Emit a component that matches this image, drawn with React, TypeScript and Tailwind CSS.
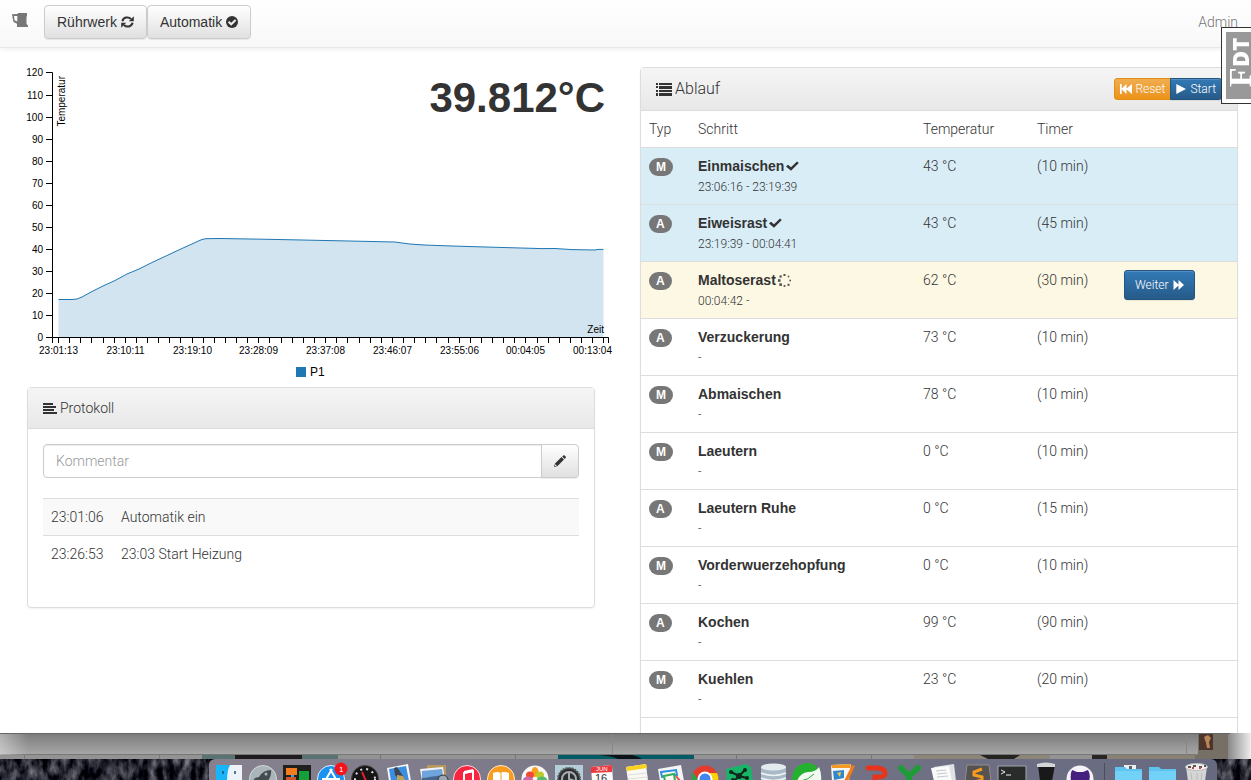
import type { ReactNode } from "react"

interface IconProps {
    className?: string
}

interface Step {
    type: "M" | "A"
    name: string
    time: string
    temp: number
    timer: number
    state?: "done" | "active"
}

const steps: Step[] = [
    { type: "M", name: "Einmaischen", time: "23:06:16 - 23:19:39", temp: 43, timer: 10, state: "done" },
    { type: "A", name: "Eiweisrast", time: "23:19:39 - 00:04:41", temp: 43, timer: 45, state: "done" },
    { type: "A", name: "Maltoserast", time: "00:04:42 -", temp: 62, timer: 30, state: "active" },
    { type: "A", name: "Verzuckerung", time: "-", temp: 73, timer: 10 },
    { type: "M", name: "Abmaischen", time: "-", temp: 78, timer: 10 },
    { type: "M", name: "Laeutern", time: "-", temp: 0, timer: 10 },
    { type: "A", name: "Laeutern Ruhe", time: "-", temp: 0, timer: 15 },
    { type: "M", name: "Vorderwuerzehopfung", time: "-", temp: 0, timer: 10 },
    { type: "A", name: "Kochen", time: "-", temp: 99, timer: 90 },
    { type: "M", name: "Kuehlen", time: "-", temp: 23, timer: 20 },
]

const logs = [
    { time: "23:01:06", text: "Automatik ein" },
    { time: "23:26:53", text: "23:03 Start Heizung" },
]

/* Icons */

const BeerIcon = ({ className }: IconProps) => (
    <svg className={className} viewBox="0 0 17 15" fill="currentColor">
        <path fillRule="evenodd" d="M0 1.2 6 1 5.6 0H15v3l-.5.8V11l1.5 1.5V14H5v-3.2L1.5 9 .8 6zM2 3l.5 4.2 2.8 1.2V3z" />
    </svg>
)

const RefreshIcon = ({ className }: IconProps) => (
    <svg className={className} viewBox="0 0 13 12" fill="none" stroke="currentColor" strokeWidth="2">
        <path d="M1.4 5.2A5 4.8 0 0 1 10 3M11.6 6.8A5 4.8 0 0 1 3 9" />
        <path d="M12.8.3v5H7.8zM.2 11.7v-5h5z" fill="currentColor" stroke="none" />
    </svg>
)

const OkSignIcon = ({ className }: IconProps) => (
    <svg className={className} viewBox="0 0 12 12">
        <circle cx="6" cy="6" r="6" fill="currentColor" />
        <path d="M2.6 5.8 5.2 8.3 9.6 4" fill="none" stroke="#f0f0f0" strokeWidth="2" />
    </svg>
)

const CheckIcon = ({ className }: IconProps) => (
    <svg className={className} viewBox="0 0 13 10" fill="currentColor">
        <path d="M0 5.6 2 3.7l3 2.6L11 .4l1.8 1.7L5 9.8z" />
    </svg>
)

const PencilIcon = ({ className }: IconProps) => (
    <svg className={className} viewBox="0 0 12 12" fill="currentColor">
        <path d="M9.2.4Q10 0 10.6.6l1 1q.6.7 0 1.4l-.9.9-2.5-2.5zM7.5 2.1 10 4.6 3.6 11 0 12l1-3.5z" />
        <path d="m1.4 9.2 1.4 1.4-1.3.4-.5-.5z" fill="#fff" />
    </svg>
)

const ListIcon = ({ className }: IconProps) => (
    <svg className={className} viewBox="0 0 16 13" fill="currentColor">
        <path d="M0 0h2v2H0zM3 0h13v2H3zM0 3h2v2H0zM3 3h13v3H3zM0 7h2v2H0zM3 7h13v2H3zM0 10h2v3H0zM3 10h13v3H3z" />
    </svg>
)

const AlignLeftIcon = ({ className }: IconProps) => (
    <svg className={className} viewBox="0 0 14 11" fill="currentColor">
        <path d="M0 0h10v2H0zM0 3h13v2H0zM0 6h11v2H0zM0 9h14v2H0z" />
    </svg>
)

const FastBackwardIcon = ({ className }: IconProps) => (
    <svg className={className} viewBox="0 0 12 10" fill="currentColor">
        <path d="M0 0h1.7v4.5L6.5 0v4.5L12 0v10L6.5 5.5V10L1.7 5.5V10H0z" />
    </svg>
)

const PlayIcon = ({ className }: IconProps) => (
    <svg className={className} viewBox="0 0 10 10" fill="currentColor">
        <path d="M.3 0 10 5 .3 10z" />
    </svg>
)

const ForwardIcon = ({ className }: IconProps) => (
    <svg className={className} viewBox="0 0 11 10" fill="currentColor">
        <path d="M.5 0 5.5 4.5V0L11 5 5.5 10V5.5L.5 10z" />
    </svg>
)

const spinnerDots = [
    [6.5, 1, 1],
    [10.5, 2.5, 0.8],
    [12.2, 6.5, 0.8],
    [10.5, 10.8, 1],
    [6.5, 12, 0.9],
    [2.6, 10.6, 1.3],
    [1.2, 6.5, 1.3],
    [2.6, 2.5, 1.1],
]

const SpinnerIcon = ({ className }: IconProps) => (
    <svg className={className} viewBox="0 0 13 13" fill="currentColor">
        {spinnerDots.map(([x, y, r], i) => (
            <rect key={i} x={x - r} y={y - r} width={r * 2} height={r * 2} opacity={0.85} />
        ))}
    </svg>
)

/* Chart */

const yTicks = Array.from({ length: 13 }, (_, i) => ({ value: i * 10, y: 270 - Math.round(i * 22.045) + 0.5 }))
const xTicks = Array.from({ length: 50 }, (_, i) => Math.round(46 + i * 11.13) + 0.5)
const xLabels = ["23:01:13", "23:10:11", "23:19:10", "23:28:09", "23:37:08", "23:46:07", "23:55:06", "00:04:05", "00:13:04"]

const line =
    "M46.5 232.5H60L65 232 70 230 80 224.500 91 219 103 213.500 115 207 127 202 140 195.500 155 188.500 170 181.500 186 174.200 190 172.500 194 171.700 208 171.500 250 172.200 290 173 383 175 390 176 398 177 412 178 440 179 480 180.200 530 181.600 543 181.500 560 182.600 583 183 586 182.400H591.500"

function Chart() {
    return (
        <div className="relative">
            <svg className="block w-full font-['Liberation_Sans',Arial,sans-serif] text-[10px]" viewBox="0 0 613 320">
                <path d={`${line}V270H46.500z`} fill="#1f77b4" fillOpacity="0.2" />
                <path d={line} fill="none" stroke="#1f77b4" />
                <path d="M34 5.500H40.500V270.500H34M40.500 276V270.500H596.500V276" fill="none" stroke="#000" />
                {yTicks.map((t) => (
                    <g key={t.value}>
                        <path d={`M34 ${t.y}h6`} stroke="#000" />
                        <text x="31" y={t.y + 3.5} textAnchor="end">{t.value}</text>
                    </g>
                ))}
                {xTicks.map((x, i) => (
                    <g key={x}>
                        <path d={`M${x} 270v6`} stroke="#000" />
                        {i % 6 === 0 && <text x={x} y="287" textAnchor="middle">{xLabels[i / 6]}</text>}
                    </g>
                ))}
                <text transform="translate(53 9) rotate(-90)" textAnchor="end">Temperatur</text>
                <text x="592" y="266" textAnchor="end">Zeit</text>
                <rect x="284" y="300" width="10" height="10" fill="#1f77b4" />
                <text x="298" y="309" className="text-[12px]">P1</text>
            </svg>
            <h1 className="absolute top-2 right-5 text-[42px] leading-[46px] font-bold font-['Liberation_Sans',Arial,sans-serif]">39.812°C</h1>
        </div>
    )
}

/* Panels */

function Protocol() {
    return (
        <section className="mr-[30px] ml-[15px] rounded border border-[#ddd] bg-white shadow-[0_1px_2px_rgba(0,0,0,.05)]">
            <div className="border-b border-[#ddd] bg-linear-to-b from-[#f5f5f5] to-[#e8e8e8] px-[15px] py-[10px]">
                <h2 className="flex items-center gap-[3px] leading-5">
                    <AlignLeftIcon className="h-[11px] w-[14px]" />
                    Protokoll
                </h2>
            </div>
            <div className="p-[15px]">
                <form className="flex" onSubmit={(e) => e.preventDefault()}>
                    <input
                        type="text"
                        aria-label="Kommentar"
                        placeholder="Kommentar"
                        className="h-[34px] min-w-0 flex-1 rounded-l border border-[#ccc] px-3 shadow-[inset_0_1px_1px_rgba(0,0,0,.075)] placeholder:text-[#999]"
                    />
                    <button
                        aria-label="Speichern"
                        className="-ml-px flex h-[34px] items-center rounded-r border border-[#ccc] bg-linear-to-b from-white to-[#e0e0e0] px-3 shadow-[0_1px_1px_rgba(0,0,0,.075)]"
                    >
                        <PencilIcon className="h-3 w-3" />
                    </button>
                </form>
                <table className="my-5 w-full">
                    <tbody>
                        {logs.map((log) => (
                            <tr key={log.time} className="border-t border-[#ddd] leading-5 odd:bg-[#f9f9f9]">
                                <td className="w-[70px] p-2">{log.time}</td>
                                <td className="p-2">{log.text}</td>
                            </tr>
                        ))}
                    </tbody>
                </table>
            </div>
        </section>
    )
}

const rowColors = {
    done: "bg-[#d9edf7]",
    active: "bg-[#fcf8e3]",
    open: "bg-white",
}

const blueButton = "flex items-center gap-1 border border-[#245580] bg-linear-to-b from-[#337ab7] to-[#265a88] text-xs leading-[18px] text-white shadow-[inset_0_1px_0_rgba(255,255,255,.15),0_1px_1px_rgba(0,0,0,.075)]"

function Steps() {
    return (
        <section className="ml-[15px] rounded border border-[#ddd] bg-white shadow-[0_1px_2px_rgba(0,0,0,.05)]">
            <div className="flex items-center justify-between border-b border-[#ddd] bg-linear-to-b from-[#f5f5f5] to-[#e8e8e8] px-[15px] py-[10px]">
                <h2 className="flex items-center gap-[3px] text-base leading-[22px]">
                    <ListIcon className="h-[13px] w-4" />
                    Ablauf
                </h2>
                <div className="flex">
                    <button className="flex items-center gap-[3px] rounded-l-[3px] border border-[#e38d13] bg-linear-to-b from-[#f0ad4e] to-[#eb9316] px-[5px] py-px text-xs leading-[18px] text-white">
                        <FastBackwardIcon className="h-[10px] w-3" />
                        Reset
                    </button>
                    <button className={`${blueButton} -ml-px rounded-r-[3px] px-[5px] py-px`}>
                        <PlayIcon className="h-[10px] w-[10px]" />
                        Start
                    </button>
                </div>
            </div>
            <table className="w-full table-fixed text-left leading-5">
                <thead>
                    <tr>
                        <th className="w-[49px] p-2 font-light">Typ</th>
                        <th className="w-[225px] p-2 font-light">Schritt</th>
                        <th className="w-[114px] p-2 font-light">Temperatur</th>
                        <th className="w-[87px] p-2 font-light">Timer</th>
                        <th className="p-2" />
                    </tr>
                </thead>
                <tbody>
                    {steps.map((step) => (
                        <tr key={step.name} className={`border-t border-[#ddd] align-top ${rowColors[step.state ?? "open"]}`}>
                            <td className="px-2 py-[10px]">
                                <span className="block w-fit rounded-[10px] bg-[#777] px-[7px] py-[3px] text-xs leading-3 font-bold text-white font-['Liberation_Sans',Arial,sans-serif]">
                                    {step.type}
                                </span>
                            </td>
                            <td className="px-2 pt-2 pb-[6px]">
                                <div className="flex items-center font-bold font-['Liberation_Sans',Arial,sans-serif]">
                                    {step.name}
                                    {step.state === "done" && <CheckIcon className="ml-[2px] h-[10px] w-[13px]" />}
                                    {step.state === "active" && <SpinnerIcon className="ml-[2px] h-[13px] w-[13px]" />}
                                </div>
                                <div className="text-xs leading-[22px]">{step.time}</div>
                            </td>
                            <td className="p-2">{step.temp} °C</td>
                            <td className="p-2">({step.timer} min)</td>
                            <td className="px-2 pt-2">
                                {step.state === "active" && (
                                    <button className={`${blueButton} rounded-[3px] px-[10px] py-[5px]`}>
                                        Weiter
                                        <ForwardIcon className="h-[10px] w-[11px]" />
                                    </button>
                                )}
                            </td>
                        </tr>
                    ))}
                    <tr className="h-[57px] border-t border-[#ddd]">
                        <td colSpan={5} />
                    </tr>
                </tbody>
            </table>
        </section>
    )
}

/* Desktop with dock */

const dockApps: ReactNode[] = [
    // Finder
    <>
        <path d="M1 6h14l-3 16H1z" fill="#19b5fb" />
        <path d="M15 6h12v16H12q0-11 3-16z" fill="#eef3f9" />
        <path d="M8 12v3M20 12v3" stroke="#24506b" strokeWidth="1.500" />
    </>,
    // Launchpad
    <>
        <circle cx="14" cy="20" r="13.500" fill="#a9b5b9" stroke="#cfd8da" />
        <path d="M22 11q-8 0-12 7l-4 1-2 3h15q4-6 3-11z" fill="#454c50" />
        <circle cx="17" cy="15" r="1.500" fill="#a9b5b9" />
    </>,
    // Mission Control
    <>
        <path d="M0 6h28v16H0z" fill="#20211f" />
        <path d="M3 9h11v7H3z" fill="#f47b20" />
        <path d="M16 12h10v10H16z" fill="#13a03b" />
        <path d="M3 18h10v4H3z" fill="#d0552a" />
        <path d="M8 16h3v2H8z" fill="#35a5e8" />
    </>,
    // App Store
    <>
        <circle cx="14" cy="20" r="13.500" fill="#1a93f0" stroke="#e5f3fc" />
        <path d="M15 10 8 22M13 10l7 12M5 20h18" stroke="#fff" strokeWidth="2" fill="none" />
        <circle cx="24" cy="10" r="6.500" fill="#f6141c" />
        <text x="22" y="13" fontSize="8" fill="#fff">1</text>
    </>,
    // Dashboard
    <>
        <circle cx="14" cy="20" r="13.500" fill="#151515" stroke="#444" />
        <circle cx="14" cy="20" r="10" fill="none" stroke="#ddd" strokeWidth="2" strokeDasharray="2 4" />
        <path d="m11 13 4 9" stroke="#e2202c" strokeWidth="2" />
    </>,
    // Mail
    <>
        <path d="m2 9 21-4 3 17H4z" fill="#f5f7fa" />
        <path d="m4 10 17-3 3 15H6z" fill="#3b8ee0" />
        <path d="m9 9 3-1 6 9 3 5h-6l-5-6z" fill="#3c4652" />
        <path d="m12 16 6 1 3 5h-9z" fill="#c0a15c" />
    </>,
    // Preview
    <>
        <path d="M8 6h19v16H8z" fill="#b9985b" />
        <path d="m1 10 23-2 2 14H3z" fill="#eff2f6" />
        <path d="m3 12 20-2 1 7-21 2z" fill="#6fa4dd" />
        <path d="m3 19 21-3v6H3z" fill="#46678f" />
        <circle cx="24" cy="21" r="5" fill="#9aa7b4" stroke="#333" />
    </>,
    // iTunes
    <>
        <circle cx="14" cy="20" r="13.500" fill="#f7253f" stroke="#fbdfe3" />
        <path d="M11 22v-8l9-2v10" fill="none" stroke="#fff" strokeWidth="2" />
        <path d="m11 12 9-2v3l-9 2z" fill="#fff" />
    </>,
    // iBooks
    <>
        <circle cx="14" cy="20" r="13.500" fill="#f99b1c" stroke="#fdebd0" />
        <path d="M6 14q5-2 7.500 0 2.500-2 8.500 0v8H6z" fill="#fff" />
        <path d="M14 14v8" stroke="#f99b1c" />
    </>,
    // Photos
    <>
        <circle cx="14" cy="20" r="13.500" fill="#f7f7f7" />
        <ellipse cx="14" cy="13" rx="3.500" ry="5" fill="#f7a11b" />
        <ellipse cx="19" cy="16" rx="4" ry="3.500" fill="#bacb2c" />
        <ellipse cx="21" cy="20.500" rx="5" ry="3" fill="#59b96b" />
        <ellipse cx="9" cy="16" rx="4" ry="3.500" fill="#ef4b34" />
        <ellipse cx="7" cy="20.500" rx="5" ry="3" fill="#cc6aa8" />
    </>,
    // System Preferences
    <>
        <path d="M0 6h28v16H0z" fill="#b5cdd6" />
        <circle cx="14" cy="20" r="11" fill="#2b2e31" stroke="#565b5f" strokeWidth="2" strokeDasharray="2 1" />
        <circle cx="14" cy="20" r="7" fill="none" stroke="#a5abb0" strokeWidth="2" />
        <path d="M14 14v6l6 2" stroke="#a5abb0" strokeWidth="2" fill="none" />
    </>,
    // Calendar
    <>
        <path d="m2 8 21-2 1 16H3z" fill="#fafafa" />
        <path d="m2 8 21-2v7L2 14z" fill="#ee3a3e" />
        <text x="7" y="12" fontSize="6" fill="#fff">JUN</text>
        <text x="6" y="23" fontSize="11" fill="#333">16</text>
    </>,
    // Notes
    <>
        <path d="m3 8 20-3 2 17H5z" fill="#fbfaf2" />
        <path d="m3 8 20-3 1 4-20 3z" fill="#fbd21f" />
        <path d="m5 16 19-2M5 20l20-2" stroke="#ddd" />
    </>,
    // Reminders
    <>
        <path d="m1 10 23-4 3 16H3z" fill="#f5f5f5" />
        <path d="m4 13 15-2 1 5-15 2z" fill="none" stroke="#2b8fe3" strokeWidth="2" />
        <path d="m7 17 10-2 1 7H8z" fill="#fff" stroke="#36ae4f" strokeWidth="2" />
        <path d="m19 17 4 5" stroke="#e5504c" strokeWidth="2" />
    </>,
    // Chrome
    <>
        <circle cx="14" cy="20" r="13.500" fill="#e43b2d" />
        <path d="M2 13 9 24H1Q0 18 2 13z" fill="#2ba24c" />
        <path d="M14 14h12q2 4 1 9H14z" fill="#fdd20a" />
        <circle cx="14" cy="20" r="6.500" fill="#4286ee" stroke="#fff" strokeWidth="2" />
    </>,
    // Source control
    <>
        <path d="m1 10 20-5 5 3 2 14H2z" fill="#18b467" />
        <path d="m6 13 8 4 6-6M14 17l-5 5M14 17l8 2" stroke="#10281c" strokeWidth="2" fill="none" />
        <g fill="#10281c">
            <circle cx="6" cy="13" r="2" />
            <circle cx="20" cy="11" r="2" />
            <circle cx="14" cy="17" r="3" />
            <circle cx="22" cy="19" r="2" />
            <circle cx="8" cy="21" r="2" />
        </g>
    </>,
    // Database
    <>
        <path d="M1 8h25v14H1z" fill="#a9bac6" />
        <ellipse cx="13.500" cy="8" rx="12.500" ry="3.500" fill="#e4ebef" />
        <path d="M1 14q12 5 25 0M1 19q12 5 25 0" stroke="#edf2f5" fill="none" strokeWidth="1.500" />
    </>,
    // Leaf
    <>
        <path d="M-2 22Q-2 5 14 4q11 0 14 18z" fill="#23b12f" />
        <path d="M3 22q3-8 11-9 8 0 11-5 3 7 2 14z" fill="#f3f8f2" />
        <path d="M7 22q7-1 13-7" fill="none" stroke="#23b12f" />
    </>,
    // Pages
    <>
        <path d="m3 6 20-1-2 17H4z" fill="#f8f7f4" />
        <path d="m3 6 20-1-1 4H4z" fill="#f29a23" />
        <path d="m5 12 11-1v8l-10 2z" fill="#3089cf" />
        <path d="M24 6 16 22h4l7-15z" fill="#ef7c16" />
        <path d="m9 14 4-1-1 5z" fill="#f9ca38" />
    </>,
    // Parallels
    <path d="M6 9h10q7 1 7 5 0 4-7 4h-3v4" fill="none" stroke="#e6351c" strokeWidth="5" strokeLinecap="round" />,
    // X
    <path d="m5 9 8 8 9-8M13 17v6" fill="none" stroke="#1f9c39" strokeWidth="6" strokeLinecap="round" />,
    // Documents
    <>
        <path d="m4 8 20-3 2 17H5z" fill="#dfe2e4" />
        <path d="m1 9 18-2 3 15H4z" fill="#fafafa" />
        <path d="m6 12 10-1M7 15l10-1M7 18l11-1" stroke="#c5c9cc" />
    </>,
    // Sublime
    <>
        <path d="M3 6h22l2 16H1z" fill="#55524f" stroke="#918f8b" />
        <path d="m18 10-8 3v3l8 2v3l-8 2" fill="none" stroke="#f79a1e" strokeWidth="3" />
    </>,
    // Terminal
    <>
        <path d="M0 7h28v15H0z" fill="#2a2c2c" stroke="#a4a7a8" />
        <path d="m3 11 4 2-4 2M8 16h5" fill="none" stroke="#eee" />
    </>,
    // Cup
    <>
        <path d="M6 6h17l-3 16H8z" fill="#19191a" />
        <path d="M5 5q9-3 18 0v3H5z" fill="#d3d5d6" />
    </>,
    // GitHub
    <>
        <circle cx="14" cy="20" r="13.500" fill="#f4f2f7" />
        <path d="M5 22q-1-7 1-11l5 2h6l5-2q3 5 1 11z" fill="#45207e" />
    </>,
]

const Folder = () => (
    <>
        <path d="M0 8h10l2 2h15v12H0z" fill="#5cc4ee" />
        <path d="M0 12h27v10H0z" fill="#72d1f6" />
    </>
)

const dockFiles: ReactNode[] = [
    <>
        <path d="M9 6h12v8H9z" fill="#eceeef" />
        <path d="M14 7h3v5h-3z" fill="#56616b" />
        <Folder />
    </>,
    <Folder />,
    <>
        <path d="m3 8 2 14h17l2-14z" fill="#d5d5d5" />
        <ellipse cx="13.500" cy="8" rx="11" ry="3.500" fill="#f1f1f1" stroke="#bbb" />
        <path d="M5 8h3m2-1h3m3 1h3m2-1h2" stroke="#555" strokeWidth="2" />
        <path d="M9 9h2m5 0h2" stroke="#d93d3d" strokeWidth="2" />
        <path d="m8 14 1 8m5-8v8m5-8-1 8" stroke="#bbb" />
    </>,
]

function DockIcon({ children }: { children: ReactNode }) {
    return (
        <svg className="h-[21px] w-7 shrink-0 overflow-visible font-['Liberation_Sans',Arial,sans-serif]" viewBox="0 0 28 21">
            {children}
        </svg>
    )
}

function Desktop() {
    return (
        <footer className="relative flex h-[47px] shrink-0 flex-col justify-end overflow-hidden bg-[#1e1f28]">
            <svg className="absolute inset-0 h-full w-full" viewBox="0 0 1251 47" preserveAspectRatio="none">
                <defs>
                    <linearGradient id="shade" x1="0" y1="0" x2="0" y2="1">
                        <stop offset="0" stopColor="#7b7b7b" />
                        <stop offset="1" stopColor="#a8a8a8" />
                    </linearGradient>
                    <linearGradient id="edgeLeft">
                        <stop offset="0" stopColor="#fff" stopOpacity="0.400" />
                        <stop offset="1" stopColor="#fff" stopOpacity="0" />
                    </linearGradient>
                    <linearGradient id="edgeRight">
                        <stop offset="0" stopColor="#888" />
                        <stop offset="1" stopColor="#eee" />
                    </linearGradient>
                    <filter id="rock" x="0" y="0" width="100%" height="100%" colorInterpolationFilters="sRGB">
                        <feTurbulence type="fractalNoise" baseFrequency="0.120 0.060" numOctaves="4" seed="8" />
                        <feColorMatrix values="0.9 0 0 0 -0.29  0.9 0 0 0 -0.29  0.9 0 0 0 -0.25  0 0 0 0 1" />
                    </filter>
                </defs>
                <rect y="26" width="1251" height="21" filter="url(#rock)" />
                <path d="M0 22h1251v4H0z" fill="#939393" />
                <path d="M202 22h136v4H202z" fill="#587472" />
                <path d="M235 22h67v4h-67z" fill="#1f1b1e" />
                <path d="M558 22h136v4H558z" fill="#035b66" />
                <path d="M600 22q12 1 18 4h24q-4-3-10-4z" fill="#0a1416" />
                <path d="M914 22h136v4H914z" fill="#8d8578" />
                <path d="M980 22h40l-6 4h-26z" fill="#242320" />
                <path d="M1092 22h15v4h-15z" fill="#292522" />
                <path d="M1107 22h121v4h-121z" fill="#8a8175" />
                <path d="M1195 0h33v26h-33z" fill="#766f65" />
                <path d="M1199 0h14v17h-14z" fill="#4c352a" />
                <path d="m1204 4 4-2 3 3-2 4 1 6h-3l-1-5z" fill="#b98559" />
                <path d="M1228 0h23v26h-23z" fill="url(#edgeRight)" />
                <path d="M0 0h1198v19q0 3-3 3H0z" fill="url(#shade)" />
                <path d="M0 21.500h1196" stroke="#777" />
                <path d="M612.500 0v22M1186.500 0v22M613 7.500h573" stroke="#878787" fill="none" />
                <path d="M0 0h28v22H0z" fill="url(#edgeLeft)" />
                <path d="M0 .5h1230" stroke="#666" />
                <path d="M24.500 22v4M159.500 22v4M380.500 22v4M515.500 22v4M736.500 22v4M871.500 22v4" stroke="#777" />
            </svg>
            <div className="relative mr-[34px] ml-[209px] flex h-[21px] justify-between gap-[6px] rounded-t-md bg-linear-to-r from-[#87818e] to-[#666980] px-[6px]">
                {dockApps.map((icon, i) => (
                    <DockIcon key={i}>{icon}</DockIcon>
                ))}
                <span className="mx-1 mt-1 w-px bg-[#4c4d5b]" />
                {dockFiles.map((icon, i) => (
                    <DockIcon key={i}>{icon}</DockIcon>
                ))}
            </div>
        </footer>
    )
}

const navButton = "flex h-[34px] items-center gap-1 rounded border border-[#ccc] bg-linear-to-b from-white to-[#e0e0e0] px-3 font-normal font-['Liberation_Sans',Arial,sans-serif] shadow-[inset_0_1px_0_rgba(255,255,255,.15),0_1px_1px_rgba(0,0,0,.075)]"

export default function App() {
    return (
        <div className="flex h-screen flex-col overflow-hidden bg-white font-['Roboto','Liberation_Sans',sans-serif] text-sm font-light text-[#333]">
            <div className="relative min-h-0 flex-1 overflow-hidden">
                {/* Navbar */}
                <nav className="flex h-12 items-start border-b border-[#e7e7e7] bg-linear-to-b from-white to-[#f8f8f8] pt-[5px] pr-[13px] pl-3 shadow-[0_1px_5px_rgba(0,0,0,.075)]">
                    <a href="#" aria-label="Brauerei" className="mt-2 mr-[15px] text-[#777]">
                        <BeerIcon className="h-[15px] w-[17px]" />
                    </a>
                    <button className={navButton}>
                        Rührwerk
                        <RefreshIcon className="h-3 w-[13px]" />
                    </button>
                    <button className={navButton}>
                        Automatik
                        <OkSignIcon className="h-3 w-3" />
                    </button>
                    <a href="#" className="mt-[7px] ml-auto leading-5 text-[#777]">Admin</a>
                </nav>

                <main className="grid grid-cols-2 pt-[19px] pr-[13px] pl-3">
                    <div>
                        <Chart />
                        <Protocol />
                    </div>
                    <Steps />
                </main>

                {/* Side tab */}
                <div className="absolute top-[27px] right-0 h-[77px] w-[30px] overflow-hidden border border-r-0 border-[#333] bg-white/90 py-1 pl-1">
                    <div className="flex h-full w-7 rotate-180 items-center bg-[#999] pt-3 leading-none text-white [writing-mode:vertical-rl]">
                        <span className="font-['Liberation_Serif',serif] text-[32px] font-bold">F</span>
                        <span className="font-['Open_Sans','Liberation_Sans',sans-serif] text-[22px] font-extrabold">DT</span>
                    </div>
                </div>
            </div>
            <Desktop />
        </div>
    )
}
